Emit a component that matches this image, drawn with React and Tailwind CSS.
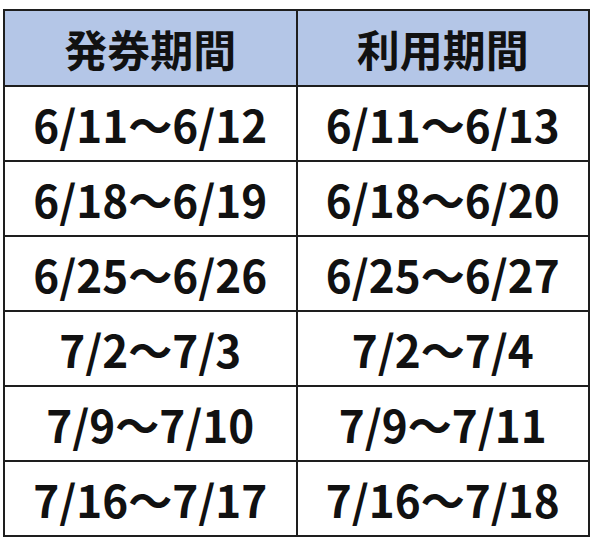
const rows = [
  ["6/11～6/12", "6/11～6/13"],
  ["6/18～6/19", "6/18～6/20"],
  ["6/25～6/26", "6/25～6/27"],
  ["7/2～7/3", "7/2～7/4"],
  ["7/9～7/10", "7/9～7/11"],
  ["7/16～7/17", "7/16～7/18"],
];

export default function App() {
  return (
    <div
      className="w-[600px] h-[546px] bg-white pt-[9px] pl-[3px]"
      style={{ fontFamily: '"Noto Sans CJK JP", "Noto Sans", sans-serif' }}
    >
      <table className="w-[587px] border-collapse text-[#111] table-fixed">
        <thead>
          <tr className="h-[76px] bg-[#b4c6e7]">
            <th className="border-2 border-[#1e1e1e] text-[43px] font-bold leading-none">発券期間</th>
            <th className="border-2 border-[#1e1e1e] text-[43px] font-bold leading-none">利用期間</th>
          </tr>
        </thead>
        <tbody>
          {rows.map(([a, b]) => (
            <tr key={a} className="h-[75px]">
              <td className="border-2 border-[#1e1e1e] text-center text-[44px] font-bold leading-none">{a}</td>
              <td className="border-2 border-[#1e1e1e] text-center text-[44px] font-bold leading-none">{b}</td>
            </tr>
          ))}
        </tbody>
      </table>
    </div>
  );
}
